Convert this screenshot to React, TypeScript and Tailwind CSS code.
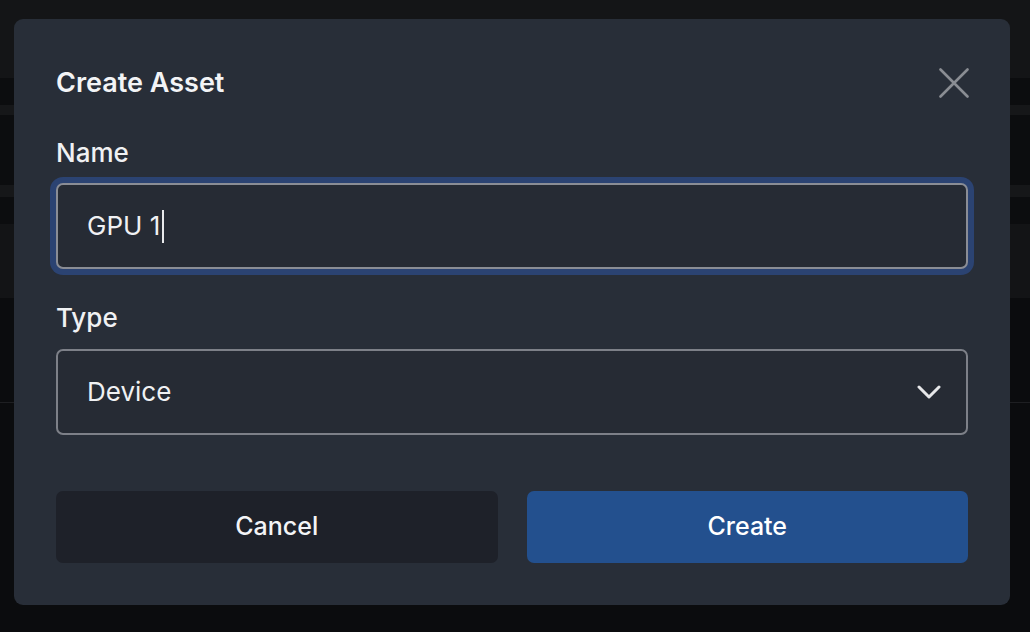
import React from "react";

export default function App() {
  return (
    <div
      className="relative w-[1030px] h-[632px] overflow-hidden bg-[#0b0c0e]"
      style={{ fontFamily: "Inter, 'Noto Sans', sans-serif" }}
    >
      {/* dimmed page behind */}
      <div className="flex flex-col">
        <div className="h-[78px] bg-[#141517]" />
        <div className="h-[27px] bg-[#0c0d0f]" />
        <div className="h-[10px] bg-[#161719]" />
        <div className="h-[70px] bg-[#0c0d0f]" />
        <div className="h-[12px] bg-[#161719]" />
        <div className="h-[27px] bg-[#0c0d0f]" />
        <div className="h-[74px] bg-[#131416]" />
        <div className="h-[104px] bg-[#0b0c0e]" />
        <div className="h-[1px] bg-[#1e1f22]" />
      </div>

      {/* modal */}
      <div className="absolute left-[14px] top-[19px] w-[996px] h-[586px] rounded-[9px] bg-[#282e38] px-[42px] pt-[48px] flex flex-col">
        <div className="flex items-center justify-between h-[32px]">
          <h2 className="text-[27px] leading-[32px] font-semibold text-[#f3f4f6]">Create Asset</h2>
          <svg
            width="30"
            height="30"
            viewBox="0 0 30 30"
            className="mr-[-1px]"
            fill="none"
            stroke="#8a8d93"
            strokeWidth="2.6"
            strokeLinecap="round"
          >
            <path d="M1.5 1.5 L28.5 28.5 M28.5 1.5 L1.5 28.5" />
          </svg>
        </div>

        <label className="mt-[38px] h-[32px] text-[26px] leading-[32px] font-medium text-[#f0f1f3]">Name</label>
        <div className="mt-[14px] h-[86px] rounded-[7px] border-2 border-[#8a8d95] bg-[#262b34] ring-[6px] ring-[#2b4372] flex items-center pl-[29px]">
          <span className="text-[26px] leading-[32px] text-[#f0f1f3]">GPU 1</span>
          <span className="ml-[2px] w-[2px] h-[33px] bg-[#e8e9eb]" />
        </div>

        <label className="mt-[33px] h-[32px] text-[26px] leading-[32px] font-medium text-[#f0f1f3]">Type</label>
        <div className="mt-[15px] h-[86px] rounded-[7px] border-2 border-[#7d8088] bg-[#262b34] flex items-center justify-between pl-[29px] pr-[25px]">
          <span className="text-[26px] leading-[32px] text-[#f0f1f3]">Device</span>
          <svg width="24" height="15" viewBox="0 0 24 15" fill="none" stroke="#e6e7e9" strokeWidth="3" strokeLinecap="round" strokeLinejoin="round">
            <path d="M2 2 L12 12 L22 2" />
          </svg>
        </div>

        <div className="mt-[56px] grid grid-cols-2 gap-[29px]">
          <button className="h-[72px] rounded-[7px] bg-[#1e2129] text-[25px] font-medium text-[#f3f4f6]">Cancel</button>
          <button className="h-[72px] rounded-[7px] bg-[#23508e] text-[25px] font-medium text-[#ffffff]">Create</button>
        </div>
      </div>
    </div>
  );
}
